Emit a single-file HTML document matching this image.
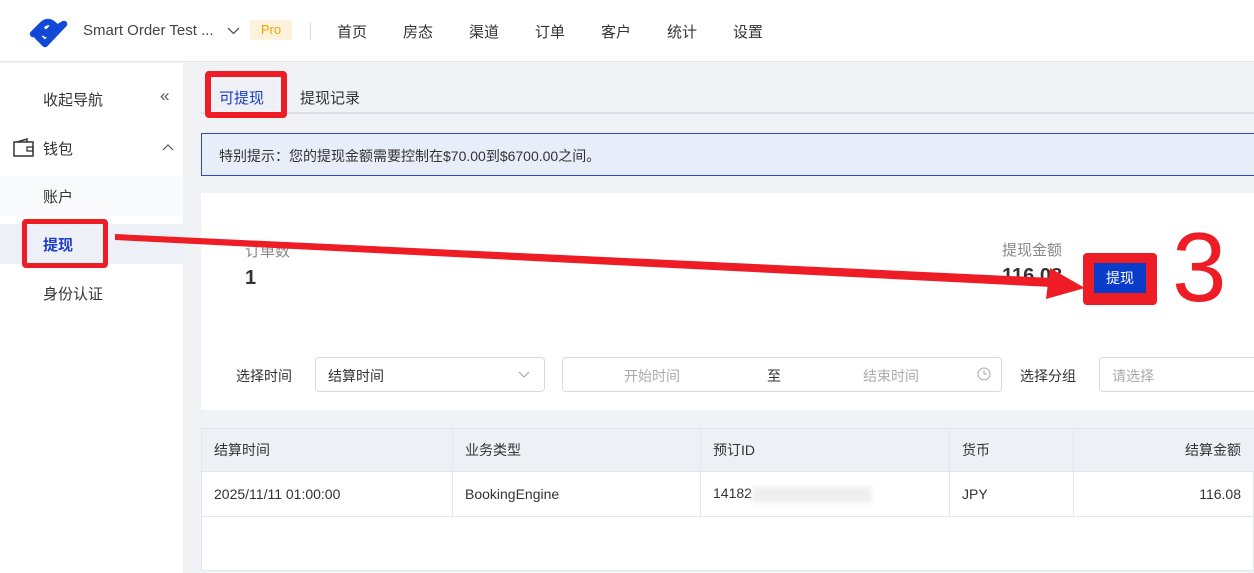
<!DOCTYPE html><html><head><meta charset="utf-8"><style>
*{box-sizing:border-box;margin:0;padding:0}
body{width:1254px;height:573px;overflow:hidden;background:#f0f2f5;font-family:"Liberation Sans","Noto Sans CJK SC",sans-serif;font-size:14px;color:#333;position:relative}
.a{position:absolute}
.hdr{left:0;top:0;width:1254px;height:62px;background:#fff;border-bottom:1px solid #e4e6eb}
.nav span{position:absolute;top:21px;font-size:15px;color:#333}
.side{left:0;top:63px;width:183px;height:510px;background:#fff}
.sel{border:1px solid #d9d9d9;border-radius:4px;background:#fff;height:35px}
td,th{border-right:1px solid #e4e6eb;border-bottom:1px solid #e4e6eb;padding:0 12px;font-weight:normal;text-align:left;font-size:14px}
</style></head><body>
<div class="a hdr"></div>
<svg class="a" style="left:26px;top:10px" width="46" height="40" viewBox="0 0 46 40"><path d="M7 24 L16 15 Q22 9 28 15 L31 18 L38 14 L19 34 L11 26 L17 21 L20 24 L26 18" fill="none" stroke="#1248d6" stroke-width="6.5" stroke-linejoin="round" stroke-linecap="round"/></svg>
<div class="a" style="left:83px;top:22px;font-size:15px;color:#444">Smart Order Test ...</div>
<svg class="a" style="left:227px;top:27px" width="13" height="8"><path d="M1 1 L6.5 6.5 L12 1" fill="none" stroke="#555" stroke-width="1.3"/></svg>
<div class="a" style="left:250px;top:20px;width:42px;height:20px;background:#fdf3dc;color:#f5a000;font-size:13px;text-align:center;line-height:20px">Pro</div>
<div class="a" style="left:310px;top:22px;width:1px;height:18px;background:#ddd"></div>
<div class="nav"><span style="left:337px">首页</span><span style="left:403px">房态</span><span style="left:469px">渠道</span><span style="left:535px">订单</span><span style="left:601px">客户</span><span style="left:667px">统计</span><span style="left:733px">设置</span></div>
<div class="a side"></div>
<div class="a" style="left:43px;top:89px;font-size:15px">收起导航</div>
<div class="a" style="left:160px;top:86px;font-size:17px;color:#555">«</div>
<svg class="a" style="left:13px;top:138px" width="22" height="20"><rect x="1" y="4" width="19" height="14" fill="none" stroke="#333" stroke-width="1.5"/><path d="M4 4 L14 1 L14 4" fill="none" stroke="#333" stroke-width="1.5"/><rect x="14" y="9" width="6" height="4" fill="none" stroke="#333" stroke-width="1.3"/></svg>
<div class="a" style="left:43px;top:138px;font-size:15px">钱包</div>
<svg class="a" style="left:162px;top:143px" width="12" height="8"><path d="M1 7 L6 2 L11 7" fill="none" stroke="#555" stroke-width="1.2"/></svg>
<div class="a" style="left:0;top:176px;width:183px;height:40px;background:#f9fafb"></div>
<div class="a" style="left:43px;top:186px;font-size:15px">账户</div>
<div class="a" style="left:0;top:224px;width:183px;height:40px;background:#eef0f7"></div>
<div class="a" style="left:43px;top:234px;font-size:15px;color:#1a3cc8;font-weight:bold">提现</div>
<div class="a" style="left:43px;top:283px;font-size:15px">身份认证</div>
<div class="a" style="left:201px;top:112px;width:1053px;height:2px;background:#dcdfe5"></div>
<div class="a" style="left:214px;top:82px;width:63px;height:28px;background:#eef0f5"></div>
<div class="a" style="left:219px;top:87px;font-size:15px;color:#1a3cc8">可提现</div>
<div class="a" style="left:300px;top:87px;font-size:15px">提现记录</div>
<div class="a" style="left:201px;top:133px;width:1060px;height:43px;background:#e7edf9;border:1px solid #2a4ccc"></div>
<div class="a" style="left:219px;top:146px;font-size:14px;color:#333">特别提示：您的提现金额需要控制在$70.00到$6700.00之间。</div>
<div class="a" style="left:201px;top:193px;width:1053px;height:217px;background:#fff"></div>
<div class="a" style="left:245px;top:240px;color:#888;font-size:15px">订单数</div>
<div class="a" style="left:245px;top:267px;font-size:20px;font-weight:bold">1</div>
<div class="a" style="left:1002px;top:239px;color:#888;font-size:15px">提现金额</div>
<div class="a" style="left:1002px;top:265px;font-size:20px;font-weight:bold">116.08</div>
<div class="a" style="left:1083px;top:253px;width:74px;height:52px;background:#ee1c25;border-radius:4px"></div>
<div class="a" style="left:1094px;top:263px;width:52px;height:30px;background:#0a3ccc;color:#fff;text-align:center;line-height:30px;font-size:14px">提现</div>
<div class="a" style="left:1172px;top:218px;font-size:98px;color:#ee1c25;line-height:1">3</div>
<div class="a" style="left:236px;top:366px">选择时间</div>
<div class="a sel" style="left:315px;top:357px;width:230px"></div>
<div class="a" style="left:328px;top:366px">结算时间</div>
<svg class="a" style="left:518px;top:371px" width="12" height="8"><path d="M1 1 L6 6 L11 1" fill="none" stroke="#aaa" stroke-width="1.2"/></svg>
<div class="a sel" style="left:562px;top:357px;width:440px"></div>
<div class="a" style="left:624px;top:366px;color:#aaa">开始时间</div>
<div class="a" style="left:767px;top:366px">至</div>
<div class="a" style="left:863px;top:366px;color:#aaa">结束时间</div>
<svg class="a" style="left:977px;top:367px" width="14" height="14"><circle cx="7" cy="7" r="6" fill="none" stroke="#aaa"/><path d="M7 3.5V7H10" fill="none" stroke="#aaa"/></svg>
<div class="a" style="left:1020px;top:366px">选择分组</div>
<div class="a sel" style="left:1099px;top:357px;width:170px"></div>
<div class="a" style="left:1112px;top:366px;color:#aaa">请选择</div>
<div class="a" style="left:201px;top:428px;width:1053px;height:143px;background:#fff;border:1px solid #e4e6eb"></div>
<table class="a" style="left:201px;top:428px;width:1060px;border-collapse:collapse;border-top:1px solid #e4e6eb;border-left:1px solid #e4e6eb">
<tr style="height:43px;background:#eef0f6"><th style="width:251px">结算时间</th><th style="width:248px">业务类型</th><th style="width:249px">预订ID</th><th style="width:124px">货币</th><th style="text-align:right;padding-right:19px">结算金额</th></tr>
<tr style="height:45px"><td>2025/11/11 01:00:00</td><td>BookingEngine</td><td>14182<span style="display:inline-block;width:120px;height:16px;background:#eee;vertical-align:middle;filter:blur(3px)"></span></td><td>JPY</td><td style="text-align:right;padding-right:19px">116.08</td></tr>
</table>
<div class="a" style="left:22px;top:219px;width:86px;height:49px;border:5px solid #ee1c25;border-radius:4px"></div>
<div class="a" style="left:205px;top:71px;width:82px;height:47px;border:6px solid #ee1c25;border-radius:4px"></div>
<svg class="a" style="left:0;top:0" width="1254" height="573"><polygon points="115,234 1052,278 1052,287 115,240" fill="#ee1c25"/><polygon points="1085,288 1050,268 1046,299" fill="#ee1c25"/></svg>
</body></html>
